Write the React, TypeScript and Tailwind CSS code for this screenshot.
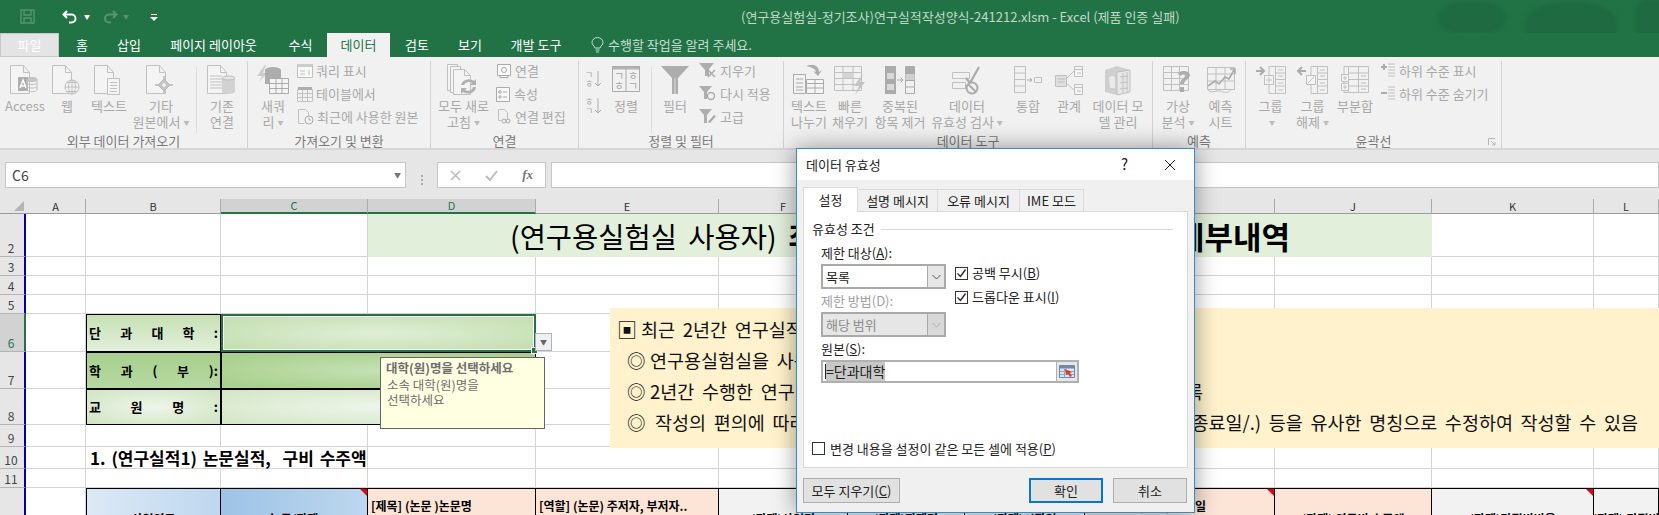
import React from "react";

const G = "#c0c0c0";
const S = "#b8b8b8";
const D = "#ababab";

function Ic({ w = 32, h = 32, children, sw = 1 }: { w?: number; h?: number; children: React.ReactNode; sw?: number }) {
  return (
    <svg width={w} height={h} viewBox={`0 0 ${w} ${h}`} fill="none" stroke={G} strokeWidth={sw}>
      {children}
    </svg>
  );
}
const Doc = () => (
  <>
    <path d="M1.5 1.5h13l6 7v21h-19z" fill="#f4f4f4" />
    <path d="M14.5 1.5v7h6" />
  </>
);

const IAccess = () => (
  <Ic>
    <Doc />
    <path d="M9 13h10v14H9z" fill="#adadad" stroke="none" />
    <path d="M11 24l3-8 3 8M12 22h4" stroke="#fff" strokeWidth={1.4} />
    <ellipse cx="23" cy="15.5" rx="5" ry="2" fill="#c6c6c6" />
    <path d="M18 15.5v10c0 3 10 3 10 0v-10M18 19c0 2 10 2 10 0M18 22.500c0 2 10 2 10 0" fill="none" />
  </Ic>
);
const IWeb = () => (
  <Ic>
    <Doc />
    <circle cx="21" cy="23" r="7" fill="#f4f4f4" />
    <path d="M14 23h14M21 16v14M16 18.500h10M16 27.500h10" />
    <ellipse cx="21" cy="23" rx="3.500" ry="7" />
  </Ic>
);
const IText = () => (
  <Ic>
    <Doc />
    <path d="M14.500 14.500h12v16h-12z" fill="#f4f4f4" />
    <path d="M17 18.500h7M17 21.500h7M17 24.500h7M17 27.500h7" />
  </Ic>
);
const IOther = () => (
  <Ic>
    <Doc />
    <path d="M19 12v18M10 21h18" stroke={S} strokeWidth={1.5} />
    <path d="M19 15l6 6-6 6-6-6z" fill="#c5c5c5" stroke={S} />
    <circle cx="19" cy="21" r="2.400" fill="#f4f4f4" />
  </Ic>
);
const IExisting = () => (
  <Ic>
    <Doc />
    <path d="M4 12h12M4 15h12M4 18h12M4 21h12M4 24h12" />
    <path d="M16 14h13v14c-2 2.500-11 2.500-13 0z" fill="#d2d2d2" stroke="none" />
    <ellipse cx="22.500" cy="14" rx="6.500" ry="2" fill="#e4e4e4" />
  </Ic>
);
const INewQuery = () => (
  <Ic w={34}>
    <path d="M9 1L1 12h5L3 18l8-9H7l3-8z" fill="#cccccc" stroke="none" />
    <ellipse cx="17" cy="6" rx="8" ry="3" fill="#adadad" stroke="none" />
    <path d="M9 6h16v14H9z" fill="#adadad" stroke="none" />
    <path d="M13.500 14.500h19v15h-19z" fill="#f4f4f4" stroke={D} />
    <path d="M13.500 19.500h19M13.500 24.500h19M20 14.500v15M26 14.500v15" stroke={D} />
  </Ic>
);
const IRefresh = () => (
  <Ic w={36} h={34}>
    <path d="M1.500 1.500h10v26h-10z" fill="#f4f4f4" />
    <path d="M4.500 3.500h10v26h-10z" fill="#f4f4f4" />
    <path d="M7.500 6.500h11l6 6v19h-17z" fill="#f4f4f4" />
    <path d="M18.500 6.500v6h6" />
    <path d="M15 22a8 7 0 0 1 13-4l2-2v6h-6l2-2a5 4 0 0 0-8 2zM30 24a8 7 0 0 1-13 5l-2 2v-6h6l-2 2a5 4 0 0 0 8-3z" fill="#b0b0b0" stroke="none" />
  </Ic>
);
const ISort = () => (
  <Ic w={30} h={30}>
    <path d="M1 1h28v3.500H1z" fill="#b4b4b4" stroke="none" />
    <path d="M1.500 1.500h27v25h-27zM15 1.500v25" stroke={D} />
    <text x="3" y="15" fontSize="11" fill="#a6a6a6" stroke="none">ㄱ</text>
    <text x="3" y="25" fontSize="11" fill="#a6a6a6" stroke="none">ㅎ</text>
    <text x="17" y="15" fontSize="11" fill="#a6a6a6" stroke="none">ㅎ</text>
    <text x="17" y="25" fontSize="11" fill="#a6a6a6" stroke="none">ㄱ</text>
  </Ic>
);
const IFilter = () => (
  <Ic w={30} h={30}>
    <path d="M1 1h28L18 13v16h-6V13z" fill="#adadad" stroke="none" />
    <path d="M15 13v16" stroke="#dcdcdc" />
  </Ic>
);
const IFlash = () => (
  <Ic w={34} h={30}>
    <path d="M1.500 9.500h12v19h-12zM4 14h7M4 18h7M4 22h7M4 25h7" stroke={D} />
    <path d="M14.500 14.500h17v14h-17zM14.500 18.500h17M23 14.500v14M14.500 23h17" stroke={D} fill="#f4f4f4" />
    <path d="M14 1c7-3 13 0 13 6l3-2-4 6-5-5 3 1c0-3-5-5-10-6z" fill="#ababab" stroke="none" />
  </Ic>
);
const IFlashFill = () => (
  <Ic w={34} h={30}>
    <path d="M1.500 1.500h27v24h-27zM1.500 7.500h27M1.500 13.500h27M1.500 19.500h27M10 1.500v24M20 1.500v24" />
    <path d="M10 8h10v5H10z" fill="#d4d4d4" stroke="none" />
    <path d="M30 9L21 21h5l-4 9 10-13h-5l3-8z" fill="#c2c2c2" stroke="none" />
  </Ic>
);
const IDup = () => (
  <Ic w={32} h={30}>
    <path d="M1 1h11v28H1z" fill="#ababab" stroke="none" />
    <path d="M3 8h7v6H3zM3 19h7v6H3z" fill="#d8d8d8" stroke="none" />
    <path d="M21.500 1.500h9v27h-9zM21.500 8.500h9M21.500 15.500h9M21.500 22h9" stroke={D} />
    <path d="M21.500 2h9v6h-9z" fill="#ababab" stroke="none" />
    <path d="M21.500 9h9v6h-9z" fill="#d0d0d0" stroke="none" />
    <path d="M13 15h6M16.500 12.500L19 15l-2.500 2.500" stroke={D} />
  </Ic>
);
const IValid = () => (
  <Ic w={32} h={30}>
    <path d="M1.500 7.500h17v6h-17zM1.500 17.500h13v6h-13z" />
    <path d="M15 13l4 5L28 2" stroke={D} strokeWidth={2.2} />
    <circle cx="21" cy="23" r="5.500" stroke={D} strokeWidth={2} fill="#f1f1f1" />
    <path d="M17 19l8 8" stroke={D} strokeWidth={2} />
  </Ic>
);
const IConsol = () => (
  <Ic w={30} h={30}>
    <path d="M1.500 1.500h11v26h-11zM1.500 8h11M1.500 14.500h11M1.500 21h11" />
    <path d="M14 15h5M17 13l2 2-2 2" stroke={D} />
    <path d="M21.500 12.500h7v5h-7z" />
  </Ic>
);
const IRel = () => (
  <Ic w={30} h={30}>
    <path d="M1.500 10.500h11v11h-11z" fill="#dedede" />
    <path d="M4 14h7M4 17h7" />
    <path d="M12 14L20 6M12 18l8 7" />
    <path d="M20.500 1.500h8v10h-8zM20.500 19.500h8v10h-8z" fill="#f4f4f4" />
    <path d="M20.500 4.500h8M23 8h4M20.500 22.500h8M23 26h4" />
  </Ic>
);
const IModel = () => (
  <Ic w={30} h={32}>
    <path d="M2 6l12-4 13 4v22l-13 3-12-3z" fill="#cfcfcf" stroke="none" />
    <path d="M14 8l13-2v22l-13 3z" fill="#e6e6e6" stroke={G} />
    <path d="M17 13l8-1M17 19l8-1M17 25l8-1M20 9v21M24 8v20" />
    <path d="M6 14c3-4 6-2 6 2v8H7z" fill="#e9e9e9" stroke="none" />
  </Ic>
);
const IWhatIf = () => (
  <Ic w={32} h={30}>
    <path d="M1.500 1.500h25v24h-25zM1.500 7.500h25M1.500 13.500h25M1.500 19.500h25M9.500 1.500v24M17.500 1.500v24" />
    <path d="M16 9c1-4 11-4 12 1 0 4-6 5-6 9h-4c0-5 5-6 5-8 0-2-3-2-4 0zM18 22h4v5h-4z" fill="#adadad" stroke="none" />
  </Ic>
);
const IForecast = () => (
  <Ic w={30} h={30}>
    <path d="M1.500 2.500h27v22h-27zM1.500 9h27M1.500 16h27M10 2.500v22M19 2.500v22" />
    <path d="M2 21l7-5 4 3 6-7 4 2 5-9" stroke={D} strokeWidth={1.6} />
    <path d="M24 4h5v5" stroke={D} strokeWidth={1.6} />
    <path d="M2 25c4 4 8 0 12 1 4 1 7 3 11-1" />
  </Ic>
);
const IGroup = ({ out = false }: { out?: boolean }) => (
  <Ic w={32} h={30}>
    {out ? <path d="M9 6H1M5 2L1 6l4 4" stroke={D} strokeWidth={2} /> : <path d="M1 6h8M5 2l4 4-4 4" stroke={D} strokeWidth={2} />}
    <path d="M20 1.500h-6v27h6" />
    <path d="M20.500 1.500h10v27h-10zM20.500 8h10M20.500 14.500h10M20.500 21h10" />
    <path d="M23 5h5M23 11h5M23 18h5M23 25h5" />
    <path d="M9.500 10.500h9v9h-9z" fill="#f4f4f4" />
    {out ? <path d="M11 18l6-6" /> : <path d="M11 15h6M14 12v6" />}
  </Ic>
);
const ISub = () => (
  <Ic w={30} h={30}>
    <path d="M8 1.500H4v26h4" />
    <path d="M8.500 1.500h20v26h-20zM8.500 8h20M8.500 14.500h20M8.500 21h20M18.500 1.500v26" />
    <path d="M1.500 9.500h7v7h-7zM1.500 18.500h7v7h-7z" fill="#f4f4f4" />
    <path d="M3 13h4M5 11v4M3 22h4M5 20v4M21 11h5M21 18h5M21 24h5" />
  </Ic>
);
const ISortAZ = ({ first, second }: { first: string; second: string }) => (
  <Ic w={18} h={20}>
    <text x="0" y="9" fontSize="9" fill="#a6a6a6" stroke="none">{first}</text>
    <text x="0" y="18" fontSize="9" fill="#a6a6a6" stroke="none">{second}</text>
    <path d="M13 2v15M10 14l3 3 3-3" stroke={D} />
  </Ic>
);

const SmQuery = () => (
  <Ic w={16} h={16}>
    <path d="M.5 1.500h15v13H.5z" fill="#f8f8f8" />
    <path d="M1 1h14v3H1z" fill="#cccccc" stroke="none" />
    <path d="M3 8h5M12 7v5M3 11h5" />
  </Ic>
);
const SmTable = () => (
  <Ic w={16} h={16}>
    <path d="M.5 3.500h15v12H.5zM.5 7.500h15M.5 11.500h15M5.500 3.500v12M10.500 3.500v12" />
    <path d="M1 1h14v3H1z" fill="#adadad" stroke="none" />
  </Ic>
);
const SmRecent = () => (
  <Ic w={17} h={17}>
    <path d="M1.500 1.500h7l3 3v5M1.500 1.500v14h6" />
    <circle cx="12" cy="12" r="4" fill="#f4f4f4" stroke={D} />
    <path d="M12 9.500V12h2" stroke={D} />
  </Ic>
);
const SmConn = () => (
  <Ic w={16} h={16}>
    <path d="M1.500 1.500h13v11h-13z" fill="#f8f8f8" stroke={D} />
    <circle cx="8" cy="7" r="2.500" stroke={D} />
    <path d="M4 12.500h8v2H4z" stroke={D} />
  </Ic>
);
const SmProp = () => (
  <Ic w={15} h={16}>
    <path d="M.5 1.500h13v14H.5z" fill="#f8f8f8" stroke={D} />
    <path d="M3 5h2v2H3zM3 10h2v2H3zM7 6h4M7 11h4" stroke={D} />
  </Ic>
);
const SmEdit = () => (
  <Ic w={16} h={17}>
    <path d="M2.500 1.500h6l3 3v7M2.500 1.500v11h3" />
    <path d="M6 13a2 2 0 0 1 4 0 2 2 0 0 1-4 0zM10 13a2 2 0 0 1 4 0 2 2 0 0 1-4 0z" stroke={D} />
  </Ic>
);
const SmClear = () => (
  <Ic w={18} h={17}>
    <path d="M0 1h15L10 7v7H6V8z" fill="#adadad" stroke="none" />
    <path d="M9 8l7 7M16 8l-7 7" stroke={D} strokeWidth={1.5} />
  </Ic>
);
const SmReapply = () => (
  <Ic w={18} h={17}>
    <path d="M0 1h13L8 7v7H5V7z" fill="#adadad" stroke="none" />
    <circle cx="12" cy="11" r="3.500" stroke={D} strokeWidth={1.4} />
  </Ic>
);
const SmAdv = () => (
  <Ic w={18} h={17}>
    <path d="M0 1h13L8 7v8H5V7z" fill="#adadad" stroke="none" />
    <path d="M9 14l6-7 2 1-6 7z" fill="#a6a6a6" stroke="none" />
  </Ic>
);
const SmShow = ({ plus = false }: { plus?: boolean }) => (
  <Ic w={16} h={15}>
    <path d={plus ? "M1 4h6M4 1v6" : "M1 7h6"} stroke={D} strokeWidth={2} />
    <path d="M8 1h7M8 4h7M8 7h7M8 10h7M8 13h7" />
  </Ic>
);

function RBtn({ cls, icon, l1, l2, caret }: { cls: string; icon: React.ReactNode; l1?: string; l2?: string; caret?: boolean }) {
  return (
    <div className={`flex shrink-0 flex-col items-center ${cls}`}>
      <div className="flex h-[37px] items-center justify-center">{icon}</div>
      <div className="whitespace-nowrap leading-[15.5px]">{l1 || "\u00a0"}</div>
      <div className="whitespace-nowrap leading-[15.5px]">
        {l2}
        {caret && <span className="ml-[3px] align-middle text-[6px] text-[#bbb]">▼</span>}
      </div>
    </div>
  );
}
function Sm({ icon, children }: { icon: React.ReactNode; children: string }) {
  return (
    <div className="flex h-[23px] items-center gap-[3px] whitespace-nowrap">
      {icon}
      <span>{children}</span>
    </div>
  );
}
function Grp({ cls, title, children, launcher }: { cls: string; title: string; children: React.ReactNode; launcher?: boolean }) {
  return (
    <div className={`relative flex h-[87px] shrink-0 flex-col border-r border-[#d2d2d2] ${cls}`}>
      <div className="flex h-[73px] pl-[2px]">{children}</div>
      <div className="h-[14px] whitespace-nowrap text-center leading-[14px] text-[#7a7a7a]">{title}</div>
      {launcher && (
        <svg width="8" height="8" className="absolute bottom-[2px] right-[5px]" fill="none" stroke="#b5b5b5">
          <path d="M.5 7V.5H7M3 3l4 4M4 7h3V4" />
        </svg>
      )}
    </div>
  );
}
const VSep = ({ cls }: { cls: string }) => <div className={`mt-[6px] h-[66px] w-px shrink-0 bg-[#dcdcdc] ${cls}`} />;

function Tab({ cls, children }: { cls: string; children: React.ReactNode }) {
  return <div className={`flex h-full shrink-0 items-center justify-center whitespace-nowrap ${cls}`}>{children}</div>;
}

const colNames = ["A", "B", "C", "D", "E", "F", "G", "H", "I", "J", "K", "L"];
const gl = "border-r border-b border-[#d4d4d4]";

function RowNum({ n, active }: { n: number; active?: boolean }) {
  return (
    <div
      className={`flex items-end justify-center border-b border-r-2 border-b-[#b4b4b4] pb-[1px] pr-[2px] text-[12px] leading-[14px] ${
        active ? "border-r-[#217346] bg-[#d2d2d2] text-[#217346]" : "border-r-[#0000a8] bg-[#e6e6e6] text-[#444]"
      }`}
    >
      {n}
    </div>
  );
}
const Blank = ({ count }: { count: number }) => (
  <>
    {Array.from({ length: count }).map((_, i) => (
      <div key={i} className={gl} />
    ))}
  </>
);
function PlainRow({ n }: { n: number }) {
  return (
    <>
      <RowNum n={n} />
      <Blank count={12} />
    </>
  );
}
function Spread({ cls, items }: { cls: string; items: string[] }) {
  return (
    <div className={`flex items-center justify-between border border-black px-[2px] text-[13px] font-bold text-black ${cls}`}>
      {items.map((t, i) => (
        <span key={i}>{t}</span>
      ))}
    </div>
  );
}
const Red = () => <div className="absolute right-0 top-0 h-[7px] w-[7px] bg-[#e8000b] [clip-path:polygon(0_0,100%_0,100%_100%)]" />;
function Head({ cls, children, red }: { cls: string; children?: React.ReactNode; red?: boolean }) {
  return (
    <div className={`relative overflow-hidden whitespace-nowrap border-r border-t border-black text-[12px] font-bold leading-[16px] text-black ${cls}`}>
      {children}
      {red && <Red />}
    </div>
  );
}
const U = ({ children }: { children: string }) => <span className="underline">{children}</span>;

function Check({ on, cls }: { on?: boolean; cls?: string }) {
  return (
    <div className={`flex h-[13px] w-[13px] shrink-0 items-center justify-center border border-[#333] bg-white ${cls || ""}`}>
      {on && (
        <svg width="11" height="11" fill="none" stroke="#222" strokeWidth="1.3">
          <path d="M1.500 5.500l3 3 5-7" />
        </svg>
      )}
    </div>
  );
}
function Select({ text, disabled }: { text: string; disabled?: boolean }) {
  return (
    <div className={`flex h-[25px] w-[125px] items-stretch border-2 border-[#a9a9a9] ${disabled ? "bg-[#e6e6e6] text-[#8c8c8c]" : "bg-white text-[#222]"}`}>
      <div className="flex flex-1 items-center pl-[3px]">{text}</div>
      <div className={`flex w-[17px] items-center justify-center border-l border-[#a9a9a9] ${disabled ? "bg-[#d8d8d8]" : "bg-[#e6e6e6]"}`}>
        <svg width="9" height="6" fill="none" stroke={disabled ? "#a8a8a8" : "#555"}>
          <path d="M.5 1l4 4 4-4" />
        </svg>
      </div>
    </div>
  );
}

export default function App() {
  return (
    <div className="relative h-[515px] w-[1659px] overflow-hidden bg-white font-['Noto_Sans_CJK_KR','Noto_Sans',sans-serif] text-[13px]">
      {/* title bar */}
      <div className="relative flex h-[33px] items-center bg-[#217346]">
        <div className="flex items-center pl-[20px]">
          <svg width="15" height="15" fill="none" stroke="#57946f" strokeWidth="1.4">
            <path d="M1 1h13v13H1zM4 1v5h7V1M4 14v-5h7v5" />
          </svg>
          <svg className="ml-[27px]" width="16" height="15" fill="none" stroke="#fff" strokeWidth="2">
            <path d="M5 2L1.500 5.500 5 9M2 5.500h7.500a3.500 3.500 0 0 1 0 8H7" />
          </svg>
          <span className="ml-[6px] text-[6px] text-white">▼</span>
          <svg className="ml-[13px]" width="15" height="15" fill="none" stroke="#57946f" strokeWidth="2">
            <path d="M10 2l3.500 3.500L10 9M13 5.500H6a3.500 3.500 0 0 0 0 8h2" />
          </svg>
          <span className="ml-[5px] text-[6px] text-[#57946f]">▼</span>
          <svg className="ml-[21px]" width="8" height="8" fill="#fff">
            <path d="M1 1h6v1H1zM0 4h8L4 8z" />
          </svg>
        </div>
        <div className="absolute left-[741px] top-[8px] whitespace-nowrap text-[13px] leading-[18px] text-[#c0d8ca]">
          (연구용실험실-정기조사)연구실적작성양식-241212.xlsm - Excel (제품 인증 실패)
        </div>
        <div className="absolute left-[1438px] top-[2px] h-[32px] w-[68px] rounded-[45%] bg-[#1f6a40] blur-[2px]" />
        <div className="absolute left-[1525px] top-[3px] h-[48px] w-[92px] rounded-[40%] bg-[#1f6a40] blur-[2px]" />
        <div className="absolute left-[1636px] top-0 h-[40px] w-[30px] rounded-[30%] bg-[#1f6a40] blur-[2px]" />
      </div>
      {/* tabs */}
      <div className="relative flex h-[24px] bg-[#217346] text-white">
        <Tab cls="w-[59px] border border-[#c8c8c8] bg-[#e4e4e4] text-white">파일</Tab>
        <Tab cls="w-[46px]">홈</Tab>
        <Tab cls="w-[48px]">삽입</Tab>
        <Tab cls="w-[121px]">페이지 레이아웃</Tab>
        <Tab cls="w-[53px]">수식</Tab>
        <Tab cls="w-[63px] bg-[#f1f1f1] text-[#217346]">데이터</Tab>
        <Tab cls="w-[54px]">검토</Tab>
        <Tab cls="w-[52px]">보기</Tab>
        <Tab cls="w-[80px]">개발 도구</Tab>
        <Tab cls="ml-[15px] gap-[4px] text-[#c8ddd1]">
          <svg width="13" height="16" fill="none" stroke="#c8ddd1">
            <path d="M4 11C3 8 1 8 1 5.500a5.500 5 0 0 1 11 0C12 8 10 8 9 11zM4.500 13h4M5 15h3" />
          </svg>
          수행할 작업을 알려 주세요.
        </Tab>
      </div>
      {/* ribbon */}
      <div className="flex h-[93px] border-b-2 border-[#d6d6d6] bg-[#f1f1f1] pt-[4px] text-[#a8a8a8]">
        <Grp cls="w-[248px]" title="외부 데이터 가져오기">
          <RBtn cls="w-[46px]" icon={<IAccess />} l1="Access" />
          <RBtn cls="w-[38px]" icon={<IWeb />} l1="웹" />
          <RBtn cls="w-[46px]" icon={<IText />} l1="텍스트" />
          <RBtn cls="w-[58px]" icon={<IOther />} l1="기타" l2="원본에서" caret />
          <VSep cls="ml-[6px]" />
          <RBtn cls="w-[50px]" icon={<IExisting />} l1="기존" l2="연결" />
        </Grp>
        <Grp cls="w-[183px]" title="가져오기 및 변환">
          <RBtn cls="w-[46px]" icon={<INewQuery />} l1="새쿼" l2="리" caret />
          <div className="-mt-[2px] ml-[1px]">
            <Sm icon={<SmQuery />}>쿼리 표시</Sm>
            <Sm icon={<SmTable />}>테이블에서</Sm>
            <Sm icon={<SmRecent />}>최근에 사용한 원본</Sm>
          </div>
        </Grp>
        <Grp cls="w-[148px]" title="연결">
          <RBtn cls="w-[61px]" icon={<IRefresh />} l1="모두 새로" l2="고침" caret />
          <div className="-mt-[2px] ml-[2px]">
            <Sm icon={<SmConn />}>연결</Sm>
            <Sm icon={<SmProp />}>속성</Sm>
            <Sm icon={<SmEdit />}>연결 편집</Sm>
          </div>
        </Grp>
        <Grp cls="w-[205px]" title="정렬 및 필터">
          <div className="flex w-[25px] shrink-0 flex-col gap-[7px] pl-[4px] pt-[8px]">
            <ISortAZ first="ㄱ" second="ㅎ" />
            <ISortAZ first="ㅎ" second="ㄱ" />
          </div>
          <RBtn cls="w-[40px]" icon={<ISort />} l1="정렬" />
          <VSep cls="ml-[5px]" />
          <RBtn cls="ml-[1px] w-[44px]" icon={<IFilter />} l1="필터" />
          <div className="-mt-[2px] ml-[2px]">
            <Sm icon={<SmClear />}>지우기</Sm>
            <Sm icon={<SmReapply />}>다시 적용</Sm>
            <Sm icon={<SmAdv />}>고급</Sm>
          </div>
        </Grp>
        <Grp cls="w-[369px]" title="데이터 도구">
          <RBtn cls="w-[46px]" icon={<IFlash />} l1="텍스트" l2="나누기" />
          <RBtn cls="w-[36px]" icon={<IFlashFill />} l1="빠른" l2="채우기" />
          <RBtn cls="w-[64px]" icon={<IDup />} l1="중복된" l2="항목 제거" />
          <RBtn cls="w-[70px]" icon={<IValid />} l1="데이터" l2="유효성 검사" caret />
          <RBtn cls="w-[52px]" icon={<IConsol />} l1="통합" />
          <RBtn cls="w-[30px]" icon={<IRel />} l1="관계" />
          <RBtn cls="w-[68px]" icon={<IModel />} l1="데이터 모" l2="델 관리" />
        </Grp>
        <Grp cls="w-[93px]" title="예측">
          <RBtn cls="w-[46px]" icon={<IWhatIf />} l1="가상" l2="분석" caret />
          <RBtn cls="w-[39px]" icon={<IForecast />} l1="예측" l2="시트" />
        </Grp>
        <Grp cls="w-[256px]" title="윤곽선" launcher>
          <RBtn cls="w-[45px]" icon={<IGroup />} l1="그룹" l2="" caret />
          <RBtn cls="w-[39px]" icon={<IGroup out />} l1="그룹" l2="해제" caret />
          <RBtn cls="w-[46px]" icon={<ISub />} l1="부분합" />
          <div className="-mt-[2px] ml-[2px]">
            <Sm icon={<SmShow plus />}>하위 수준 표시</Sm>
            <Sm icon={<SmShow />}>하위 수준 숨기기</Sm>
          </div>
        </Grp>
      </div>
      {/* formula bar */}
      <div className="flex h-[49px] bg-[#e6e6e6] pl-[5px] pt-[12px]">
        <div className="flex h-[26px] w-[401px] items-center justify-between border border-[#c6c6c6] bg-white pl-[6px] pr-[4px] text-[14px] text-[#444]">
          <span>C6</span>
          <span className="text-[7px] text-[#777]">▼</span>
        </div>
        <div className="flex w-[31px] flex-col items-center justify-center gap-[2px] pb-[1px]">
          <div className="h-[2px] w-[2px] bg-[#aaa]" />
          <div className="h-[2px] w-[2px] bg-[#aaa]" />
          <div className="h-[2px] w-[2px] bg-[#aaa]" />
        </div>
        <div className="flex h-[26px] w-[109px] items-center justify-between border border-[#c6c6c6] bg-white px-[12px]">
          <svg width="11" height="11" fill="none" stroke="#bdbdbd" strokeWidth="1.6">
            <path d="M1 1l9 9M10 1l-9 9" />
          </svg>
          <svg width="13" height="11" fill="none" stroke="#bdbdbd" strokeWidth="2">
            <path d="M1 6l4 4 7-9" />
          </svg>
          <span className="font-['Liberation_Serif',serif] text-[13px] font-bold italic text-[#777]">fx</span>
        </div>
        <div className="ml-[5px] h-[26px] flex-1 border border-[#c6c6c6] bg-white" />
      </div>
      {/* sheet */}
      <div className="grid grid-cols-[26px_60px_135px_147px_168px_183px_129px_117px_120px_190px_157px_162px_65px] grid-rows-[15px_43px_19px_19px_19px_38px_37px_36px_22px_22px_19px_60px]">
        <div className="flex items-end justify-end border-b border-[#9b9b9b] bg-[#e6e6e6] pb-[2px] pr-[2px]">
          <div className="h-[10px] w-[10px] bg-[#b4b4b4] [clip-path:polygon(100%_0,100%_100%,0_100%)]" />
        </div>
        {colNames.map((c) => {
          const sel = c === "C" || c === "D";
          return (
            <div
              key={c}
              className={`flex items-center justify-center border-r border-r-[#aaa] text-[11px] leading-[13px] ${
                sel ? "border-b-2 border-b-[#217346] bg-[#d2d2d2] text-[#217346]" : "border-b border-b-[#9b9b9b] bg-[#e6e6e6] text-[#333]"
              }`}
            >
              {c}
            </div>
          );
        })}

        <RowNum n={2} />
        <Blank count={3} />
        <div className="col-span-7 flex items-center justify-between whitespace-pre bg-[#e2efda] px-[142px] text-[31px] leading-[36px] text-black">
          <span>
            <span className="text-[28.5px] [word-spacing:5px]">(연구용실험실 사용자) </span>
            <span className="font-bold">최근 2년간</span>
          </span>
          <span className="font-bold">연구실적 세부내역</span>
        </div>
        <Blank count={2} />

        <PlainRow n={3} />
        <PlainRow n={4} />
        <PlainRow n={5} />

        <RowNum n={6} active />
        <Blank count={1} />
        <Spread cls="bg-[linear-gradient(#c6e0b4,#e2efda)]" items={["단", "과", "대", "학", ":"]} />
        <div className="relative col-span-2 border-2 border-[#217346] bg-[radial-gradient(ellipse_at_center,#e0eed7_0%,#c6e0b4_85%)] outline outline-white -outline-offset-3">
          <div className="absolute -bottom-[4px] -right-[4px] h-[7px] w-[7px] border border-white bg-[#217346]" />
          <div className="absolute -right-[18px] top-[17px] flex h-[18px] w-[17px] items-center justify-center border border-[#aab3c6] bg-[#f0f0f0] text-[7px] text-[#666]">▼</div>
        </div>
        <Blank count={8} />

        <RowNum n={7} />
        <Blank count={1} />
        <Spread cls="bg-[linear-gradient(#a9d08e,#b5d8a0)]" items={["학", "과", "(", "부", "):"]} />
        <div className="col-span-2 border border-black bg-[radial-gradient(ellipse_at_center,#c6e0b4_0%,#a9d08e_85%)]" />
        <Blank count={8} />

        <RowNum n={8} />
        <Blank count={1} />
        <Spread cls="bg-[radial-gradient(ellipse_at_center,#eef5e9_0%,#cfe4c1_100%)]" items={["교", "원", "명", ":"]} />
        <div className="col-span-2 border border-black bg-[radial-gradient(ellipse_at_center,#eef5e9_0%,#d5e7c9_90%)]" />
        <Blank count={8} />

        <PlainRow n={9} />

        <RowNum n={10} />
        <Blank count={1} />
        <div className={`col-span-2 flex items-center whitespace-pre pl-[4px] text-[17px] font-bold text-black [word-spacing:2px] ${gl}`}>1. (연구실적1) 논문실적,  구비 수주액</div>
        <Blank count={9} />

        <PlainRow n={11} />

        <div className="border-r-2 border-r-[#0000a8] bg-[#e6e6e6]" />
        <div className="border-r border-[#d4d4d4]" />
        <Head cls="flex items-center justify-center border-l bg-[linear-gradient(90deg,#dce9f6,#bdd7ee)]">사업연도</Head>
        <Head cls="flex items-center justify-center bg-[linear-gradient(90deg,#9dc3e6,#bdd7ee)]" red>논문/과제</Head>
        <Head cls="bg-[#fce4d6] pl-[3px] pt-[9px]">[제목] (논문 )논문명</Head>
        <Head cls="bg-[#fce4d6] pl-[3px] pt-[9px]">[역할] (논문) 주저자, 부저자..</Head>
        <Head cls="flex items-center justify-center bg-[#f2f2f2]">(과제)사업명</Head>
        <Head cls="flex items-center justify-center bg-[#f2f2f2]">(과제)과제명</Head>
        <Head cls="flex items-center justify-center bg-[#f2f2f2]">(과제)시작일</Head>
        <Head cls="bg-[#fce4d6] pr-[68px] pt-[9px] text-right" red>(과제) 종료일</Head>
        <Head cls="flex items-center justify-center bg-[#fce4d6]">(과제) 연구비 수주액</Head>
        <Head cls="flex items-center justify-center bg-[#f2f2f2]" red>(과제)간접비비율</Head>
        <Head cls="flex items-center justify-center bg-[#f2f2f2]">(과제) 간접비</Head>
      </div>

      {/* data validation input message */}
      <div className="absolute left-[380px] top-[357px] h-[72px] w-[165px] border border-[#666] bg-[#ffffe1] pl-[5px] pt-[2px] text-[12.5px] leading-[15px] text-[#6e6e6e]">
        <div className="font-bold">대학(원)명을 선택하세요</div>
        <div className="mt-[2px] pl-[1px]">소속 대학(원)명을</div>
        <div className="pl-[1px]">선택하세요</div>
      </div>

      {/* floating text box */}
      <div className="absolute left-[610px] top-[308px] flex h-[140px] w-[1049px] flex-col bg-[#fff2cc] pl-[10px] pr-[21px] pt-[6px] text-[18.5px] text-[#111] [word-spacing:3.5px]">
        <div className="flex h-[31px] items-center whitespace-pre">
          <span className="-ml-[3px] w-[24px] text-[20px] leading-[31px]">▣</span>
          <span>최근 2년간 연구실적 세부내역을 아래 양식에 맞춰 작성</span>
        </div>
        <div className="flex h-[31px] items-center whitespace-pre pl-[7px]">
          <span className="w-[23px]">◎</span>
          <span>연구용실험실을 사용하는 교원의 연구실적</span>
        </div>
        <div className="flex h-[31px] items-center whitespace-pre pl-[7px]">
          <span className="w-[23px]">◎</span>
          <span className="flex-1">2년간 수행한 연구</span>
          <span className="mr-[435px]">록</span>
        </div>
        <div className="flex h-[31px] items-center whitespace-pre pl-[7px]">
          <span className="w-[28px]">◎</span>
          <span className="flex-1">작성의 편의에 따라</span>
          <span>종료일/.) 등을 유사한 명칭으로 수정하여 작성할 수 있음</span>
        </div>
      </div>

      {/* dialog */}
      <div className="absolute left-[796px] top-[148px] flex h-[365px] w-[399px] flex-col border border-[#2f8ecb] bg-[#f0f0f0] text-[#222] shadow-[0_0_22px_rgba(0,0,0,0.4)]">
        <div className="flex h-[31px] shrink-0 items-center bg-white pl-[9px] pr-[18px]">
          <span className="flex-1">데이터 유효성</span>
          <span className="mr-[36px] text-[15px]">?</span>
          <svg width="12" height="12" fill="none" stroke="#222" strokeWidth="1">
            <path d="M1 1l10 10M11 1L1 11" />
          </svg>
        </div>
        <div className="relative z-10 ml-[6px] mt-[7px] flex h-[25px] items-end">
          <div className="flex h-[25px] w-[55px] items-center justify-center border border-b-0 border-[#d9d9d9] bg-white">설정</div>
          <div className="flex h-[23px] w-[80px] items-center justify-center border border-l-0 border-[#d9d9d9]">설명 메시지</div>
          <div className="flex h-[23px] w-[82px] items-center justify-center border border-l-0 border-[#d9d9d9]">오류 메시지</div>
          <div className="flex h-[23px] w-[64px] items-center justify-center border border-l-0 border-[#d9d9d9]">IME 모드</div>
        </div>
        <div className="mx-[6px] -mt-px flex h-[257px] flex-col border border-[#d9d9d9] bg-white px-[8px]">
          <div className="mt-[8px] flex h-[18px] items-center gap-[6px] leading-[18px]">
            <span>유효성 조건</span>
            <div className="mr-[6px] h-px flex-1 bg-[#d9d9d9]" />
          </div>
          <div className="ml-[9px] mt-[6px] flex">
            <div>
              <div className="h-[20px] leading-[18px]">
                제한 대상(<U>A</U>):
              </div>
              <Select text="목록" />
              <div className="h-[23px] leading-[23px] text-[#a0a0a0]">제한 방법(D):</div>
              <Select text="해당 범위" disabled />
            </div>
            <div className="ml-[9px] mt-[20px]">
              <div className="flex h-[18px] items-center gap-[4px]">
                <Check on />
                <span>
                  공백 무시(<U>B</U>)
                </span>
              </div>
              <div className="mt-[6px] flex h-[18px] items-center gap-[4px]">
                <Check on />
                <span>
                  드롭다운 표시(<U>I</U>)
                </span>
              </div>
            </div>
          </div>
          <div className="ml-[9px] h-[23px] leading-[23px]">
            원본(<U>S</U>):
          </div>
          <div className="ml-[9px] flex h-[23px] w-[258px] shrink-0 items-stretch border-2 border-[#b0b0b0] bg-white">
            <div className="flex flex-1 items-center pl-[2px]">
              <div className="h-[15px] w-px bg-[#222]" />
              <span className="bg-[#c8c8c8] text-[14px] leading-[19px]">=단과대학</span>
            </div>
            <div className="flex w-[21px] items-center justify-center border-l border-[#b0b0b0] bg-[#e6e6e6]">
              <svg width="16" height="13" fill="none">
                <path d="M.5.5h15v12H.5z" fill="#dbe6f4" stroke="#6d87ad" />
                <path d="M1 1h14v2.500H1z" fill="#6d87ad" />
                <path d="M1 6.500h14M1 9.500h14M5.500 3.500v9" stroke="#8ea6c6" />
                <path d="M6 4l7 3-2 1 2 3-2 1-2-3-2 1z" fill="#d9402b" />
              </svg>
            </div>
          </div>
          <div className="mt-[56px] flex h-[19px] items-center gap-[5px]">
            <Check />
            <span>
              변경 내용을 설정이 같은 모든 셀에 적용(<U>P</U>)
            </span>
          </div>
        </div>
        <div className="mx-[6px] mt-[10px] flex h-[25px] items-stretch">
          <div className="flex w-[97px] items-center justify-center border border-[#adadad] bg-[#e1e1e1]">
            모두 지우기(<U>C</U>)
          </div>
          <div className="ml-auto flex w-[74px] items-center justify-center border-2 border-[#0078d7] bg-[#e1e1e1]">확인</div>
          <div className="ml-[10px] mr-[1px] flex w-[74px] items-center justify-center border border-[#adadad] bg-[#e1e1e1]">취소</div>
        </div>
      </div>
    </div>
  );
}
